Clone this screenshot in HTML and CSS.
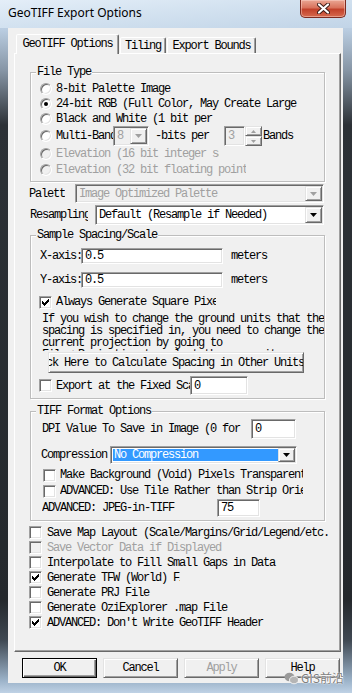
FILE: index.html
```html
<!DOCTYPE html>
<html>
<head>
<meta charset="utf-8">
<title>GeoTIFF Export Options</title>
<link rel="stylesheet" href="styles.css">
</head>
<body>
<div class="titlebar">
  <span class="title">GeoTIFF Export Options</span>
  <div class="close">
    <svg width="13" height="11" viewBox="0 0 13 11"><path d="M2 1.5L11 9.5M11 1.5L2 9.5" stroke="#3a1a14" stroke-width="4" stroke-linecap="round"/><path d="M2 1.5L11 9.5M11 1.5L2 9.5" stroke="#fff" stroke-width="2.2" stroke-linecap="round"/></svg>
  </div>
</div>
<div class="client">
  <div class="tabs">
    <div class="tab active t1">GeoTIFF Options</div>
    <div class="tab t2">Tiling</div>
    <div class="tab t3">Export Bounds</div>
  </div>
  <div class="panel">
    <div class="group g1">
      <div class="legend">File Type</div>
      <div class="rrow h15 first"><span class="radio"></span><span>8-bit Palette Image</span></div>
      <div class="rrow h15"><span class="radio on"></span><span class="clip w243">24-bit RGB (Full Color, May Create Large Files)</span></div>
      <div class="rrow h15"><span class="radio"></span><span class="clip w162">Black and White (1 bit per pixel)</span></div>
      <div class="rrow h20">
        <span class="radio"></span><span class="clip w57">Multi-Band</span>
        <div class="sunken dis combo c-bits"><span class="val">8</span><span class="arrow raised"><svg width="7" height="4" viewBox="0 0 7 4"><path d="M0 0h7L3.5 4z" fill="#a0a0a0"/></svg></span></div>
        <span class="bitsper">-bits per</span>
        <div class="sunken dis spinbox"><span class="val">3</span></div>
        <div class="spin"><span class="raised sb"><svg width="5" height="3" viewBox="0 0 5 3"><path d="M0 3h5L2.5 0z" fill="#a0a0a0"/></svg></span><span class="raised sb"><svg width="5" height="3" viewBox="0 0 5 3"><path d="M0 0h5L2.5 3z" fill="#a0a0a0"/></svg></span></div>
        <span class="bands">Bands</span>
      </div>
      <div class="rrow h16 dis"><span class="radio dis"></span><span class="clip w163">Elevation (16 bit integer samples)</span></div>
      <div class="rrow h16 dis"><span class="radio dis"></span><span class="clip w190">Elevation (32 bit floating point samples)</span></div>
    </div>

    <div class="line l-palett">
      <span class="clip w36">Palette</span>
      <div class="sunken dis combo c-palett"><span class="val dis">Image Optimized Palette</span><span class="arrow raised"><svg width="7" height="4" viewBox="0 0 7 4"><path d="M0 0h7L3.5 4z" fill="#a0a0a0"/></svg></span></div>
    </div>
    <div class="line l-resamp">
      <span class="clip w58">Resampling</span>
      <div class="sunken combo c-resamp"><span class="val">Default (Resample if Needed)</span><span class="arrow raised"><svg width="7" height="4" viewBox="0 0 7 4"><path d="M0 0h7L3.5 4z"/></svg></span></div>
    </div>

    <div class="group g2">
      <div class="legend">Sample Spacing/Scale</div>
      <div class="arow first">
        <span class="clip w41">X-axis:</span>
        <div class="sunken edit e-axis"><span class="val">0.5</span></div>
        <span class="unit">meters</span>
      </div>
      <div class="arow second">
        <span class="clip w41">Y-axis:</span>
        <div class="sunken edit e-axis"><span class="val">0.5</span></div>
        <span class="unit">meters</span>
      </div>
      <div class="crow2 sq">
        <span class="cb"><svg width="7" height="7" viewBox="0 0 7 7" shape-rendering="crispEdges"><path d="M6 0h1v1h-1zM5 1h2v1h-2zM0 2h1v1h-1zM4 2h3v1h-3zM0 3h2v1h-2zM3 3h3v1h-3zM0 4h5v1h-5zM1 5h3v1h-3zM2 6h1v1h-1z"/></svg></span>
        <span class="clip w160">Always Generate Square Pixels</span>
      </div>
      <div class="para">
        <span>If you wish to change the ground units that the</span>
        <span>spacing is specified in, you need to change the</span>
        <span>current projection by going to</span>
        <span>File-&gt;Projection to select the new units.</span>
      </div>
      <div class="raised btn calc"><span class="calc-text">Click Here to Calculate Spacing in Other Units</span></div>
      <div class="crow2 fixed">
        <span class="cb"></span>
        <span class="clip w134">Export at the Fixed Scale</span>
        <div class="sunken edit e-fixed"><span class="val">0</span></div>
      </div>
    </div>

    <div class="group g3">
      <div class="legend">TIFF Format Options</div>
      <div class="trow dpi">
        <span class="clip w204">DPI Value To Save in Image (0 for none)</span>
        <div class="sunken edit e-dpi"><span class="val">0</span></div>
      </div>
      <div class="trow comp">
        <span class="clip w69">Compression</span>
        <div class="sunken combo c-comp"><span class="val sel">No Compression</span><span class="arrow raised"><svg width="7" height="4" viewBox="0 0 7 4"><path d="M0 0h7L3.5 4z"/></svg></span></div>
      </div>
      <div class="crow3 first"><span class="cb"></span><span class="clip w243">Make Background (Void) Pixels Transparent</span></div>
      <div class="crow3"><span class="cb"></span><span class="clip w243">ADVANCED: Use Tile Rather than Strip Orientation</span></div>
      <div class="trow jpeg">
        <span class="clip w175">ADVANCED: JPEG-in-TIFF</span>
        <div class="sunken edit e-jpeg"><span class="val">75</span></div>
      </div>
    </div>

    <div class="checks">
      <div class="crow"><span class="cb"></span><span>Save Map Layout (Scale/Margins/Grid/Legend/etc.</span></div>
      <div class="crow dis"><span class="cb dis"></span><span>Save Vector Data if Displayed</span></div>
      <div class="crow"><span class="cb"></span><span>Interpolate to Fill Small Gaps in Data</span></div>
      <div class="crow"><span class="cb"><svg width="7" height="7" viewBox="0 0 7 7" shape-rendering="crispEdges"><path d="M6 0h1v1h-1zM5 1h2v1h-2zM0 2h1v1h-1zM4 2h3v1h-3zM0 3h2v1h-2zM3 3h3v1h-3zM0 4h5v1h-5zM1 5h3v1h-3zM2 6h1v1h-1z"/></svg></span><span class="clip w133">Generate TFW (World) File</span></div>
      <div class="crow"><span class="cb"></span><span>Generate PRJ File</span></div>
      <div class="crow"><span class="cb"></span><span>Generate OziExplorer .map File</span></div>
      <div class="crow"><span class="cb"><svg width="7" height="7" viewBox="0 0 7 7" shape-rendering="crispEdges"><path d="M6 0h1v1h-1zM5 1h2v1h-2zM0 2h1v1h-1zM4 2h3v1h-3zM0 3h2v1h-2zM3 3h3v1h-3zM0 4h5v1h-5zM1 5h3v1h-3zM2 6h1v1h-1z"/></svg></span><span>ADVANCED: Don't Write GeoTIFF Header</span></div>
    </div>
  </div>
  <div class="buttons">
    <div class="btn default">OK</div>
    <div class="btn raised">Cancel</div>
    <div class="btn raised dis">Apply</div>
    <div class="btn raised">Help</div>
  </div>
</div>
<div class="watermark">
  <svg width="15" height="13" viewBox="0 0 15 13"><ellipse cx="5.5" cy="5" rx="5" ry="4.2" fill="#9a9a9a"/><ellipse cx="10" cy="8" rx="4.5" ry="3.8" fill="#b5b5b5" stroke="#fff" stroke-width="0.8"/></svg>
  <span>GIS前沿</span>
</div>
</body>
</html>
```
FILE: styles.css
```css
* { box-sizing: border-box; margin: 0; padding: 0; }
html, body { width: 352px; height: 693px; overflow: hidden; }
body {
  position: relative;
  background: linear-gradient(180deg, #cfdeec 0, #b9cce0 30px, #8796a6 70px, #2c3136 125px, #24282c 600px, #3f4852 640px, #9db4ca 681px, #bfd2e5 693px);
  font-family: "Liberation Mono", monospace;
  font-size: 12px;
  line-height: 12px;
  letter-spacing: -1.2px;
  color: #000;
}

/* title bar */
.titlebar {
  height: 28px;
  display: flex;
  align-items: flex-start;
  background: linear-gradient(175deg, #e4eef8 0, #d3e2f0 45%, #c1d4e7 100%);
}
.title {
  font-family: "Noto Sans", sans-serif;
  font-size: 12px;
  line-height: 16px;
  letter-spacing: 0;
  margin: 5px 0 0 8px;
  color: #000;
}
.close {
  margin-left: auto;
  margin-right: 6px;
  width: 46px;
  height: 18px;
  border: 1px solid #7d2b20;
  border-top: none;
  border-radius: 0 0 5px 5px;
  background: linear-gradient(180deg, #eaa693 0, #d9735c 45%, #c2412a 55%, #d66a4e 100%);
  box-shadow: inset 0 0 0 1px rgba(255, 220, 210, 0.45);
  display: flex;
  align-items: center;
  justify-content: center;
}

/* client */
.client {
  margin-left: 8px;
  width: 335px;
  height: 655px;
  background: #f0f0f0;
  padding-top: 6px;
}
.tabs {
  margin-left: 8px;
  height: 20px;
  display: flex;
  align-items: flex-end;
}
.tab {
  height: 16px;
  margin-bottom: 1px;
  background: #f0f0f0;
  border: 1px solid;
  border-bottom: none;
  border-color: #fff #696969 transparent #fff;
  box-shadow: inset -1px 0 #a0a0a0;
  border-radius: 2px 2px 0 0;
  display: flex;
  justify-content: center;
  align-items: center;
  white-space: nowrap;
}
.tab.active {
  height: 20px;
  margin-bottom: 0;
  position: relative;
  z-index: 1;
  align-items: flex-start;
  padding-top: 3px;
}
.t1 { width: 103px; }
.t2 { width: 46px; margin-left: 1px; }
.t3 { width: 89px; margin-left: 1px; }

.panel {
  margin-top: -1px;
  margin-left: 6px;
  width: 327px;
  height: 599px;
  border: 1px solid;
  border-color: #fff #696969 #696969 #fff;
  box-shadow: inset -1px -1px #a0a0a0;
  display: flex;
  flex-direction: column;
  align-items: flex-start;
}

/* group boxes */
.group {
  margin-left: 15px;
  width: 295px;
  border: 1px solid #bdbdbd;
  box-shadow: inset 1px 1px #fff, 1px 1px #fff;
  display: flex;
  flex-direction: column;
  align-items: flex-start;
}
.g1 { margin-top: 18px; height: 110px; }
.g2 { margin-top: 10px; height: 164px; }
.g3 { margin-top: 12px; height: 110px; }
.legend {
  margin: -7px 0 0 5px;
  padding: 0 1px;
  height: 12px;
  background: #f0f0f0;
  white-space: nowrap;
}

.clip { overflow: hidden; white-space: nowrap; flex: none; }
.w36 { width: 36px; }
.w41 { width: 41px; }
.w57 { width: 57px; }
.w58 { width: 58px; }
.w69 { width: 69px; }
.w133 { width: 133px; }
.w134 { width: 134px; }
.w160 { width: 160px; }
.w162 { width: 162px; }
.w163 { width: 163px; }
.w175 { width: 175px; }
.w190 { width: 190px; }
.w204 { width: 204px; }
.w243 { width: 243px; }

.dis { color: #a0a0a0; }

/* radio rows */
.rrow { display: flex; align-items: center; margin-left: 9px; white-space: nowrap; }
.rrow.first { margin-top: 3px; }
.h15 { height: 15px; }
.h16 { height: 16px; }
.h20 { height: 20px; }

.radio {
  width: 12px;
  height: 12px;
  flex: none;
  margin-right: 4px;
  border-radius: 50%;
  background: #fff;
  border: 1px solid;
  border-color: #a0a0a0 #fff #fff #a0a0a0;
  box-shadow: inset 1px 1px #696969, inset -1px -1px #e3e3e3;
  display: flex;
  align-items: center;
  justify-content: center;
}
.radio.on::after {
  content: "";
  width: 4px;
  height: 4px;
  border-radius: 50%;
  background: #000;
}
.radio.dis { background: #f0f0f0; }

/* 3D controls */
.sunken {
  background: #fff;
  border: 1px solid;
  border-color: #a0a0a0 #fff #fff #a0a0a0;
  box-shadow: inset 1px 1px #696969, inset -1px -1px #e3e3e3;
  flex: none;
}
.sunken.dis { background: #f0f0f0; }
.raised {
  background: #f0f0f0;
  border: 1px solid;
  border-color: #e3e3e3 #696969 #696969 #e3e3e3;
  box-shadow: inset 1px 1px #fff, inset -1px -1px #a0a0a0;
}

.combo { display: flex; align-items: stretch; padding: 1px; }
.combo .val { flex: 1; display: flex; align-items: center; padding-left: 2px; white-space: nowrap; overflow: hidden; }
.combo .arrow {
  width: 17px;
  flex: none;
  display: flex;
  align-items: center;
  justify-content: center;
}
.combo .val.sel { background: #3399ff; color: #fff; margin: 1px 0 1px 1px; padding-left: 1px; }

.edit { display: flex; align-items: center; padding-left: 3px; }

.c-bits { width: 36px; height: 20px; }
.bitsper { margin-left: 6px; width: 54px; }
.spinbox { margin-left: 15px; width: 21px; height: 20px; display: flex; align-items: center; padding-left: 3px; }
.spin { width: 17px; height: 20px; display: flex; flex-direction: column; flex: none; }
.sb { flex: 1; display: flex; align-items: center; justify-content: center; }
.bands { margin-left: 1px; }

/* palette / resampling lines */
.line { display: flex; align-items: center; }
.l-palett { margin-top: 2px; margin-left: 14px; height: 19px; }
.c-palett { margin-left: 10px; width: 249px; height: 19px; }
.l-resamp { margin-top: 2px; margin-left: 15px; height: 20px; }
.c-resamp { margin-left: 7px; width: 229px; height: 20px; }

/* spacing group */
.arow { display: flex; align-items: center; margin-left: 9px; height: 16px; }
.arow.first { margin-top: 7px; }
.arow.second { margin-top: 8px; }
.e-axis { width: 142px; height: 16px; }
.unit { margin-left: 8px; }

.cb {
  width: 13px;
  height: 13px;
  flex: none;
  background: #fff;
  border: 1px solid;
  border-color: #a0a0a0 #fff #fff #a0a0a0;
  box-shadow: inset 1px 1px #696969, inset -1px -1px #e3e3e3;
  display: flex;
  align-items: center;
  justify-content: center;
}
.cb.dis { background: #f0f0f0; }

.crow2 { display: flex; align-items: center; margin-left: 8px; }
.crow2 .cb { margin-right: 4px; }
.crow2.sq { margin-top: 7px; height: 14px; }
.para {
  margin-top: 4px;
  margin-left: 11px;
  height: 38px;
  overflow: hidden;
  display: flex;
  flex-direction: column;
  white-space: nowrap;
}
.btn {
  width: 75px;
  height: 20px;
  display: flex;
  align-items: center;
  justify-content: center;
  overflow: hidden;
  white-space: nowrap;
  flex: none;
}
.btn.calc { margin-top: 1px; margin-left: 17px; width: 256px; height: 21px; justify-content: flex-start; }
.calc-text { flex: none; margin-left: -21px; }
.crow2.fixed { margin-top: 3px; height: 19px; }
.e-fixed { width: 58px; height: 19px; }

/* tiff group */
.trow { display: flex; align-items: center; }
.trow.dpi { margin-top: 2px; margin-left: 11px; height: 20px; }
.e-dpi { margin-left: 5px; width: 45px; height: 20px; }
.trow.comp { margin-top: 7px; margin-left: 10px; height: 18px; }
.c-comp { margin-left: 0; width: 187px; height: 18px; }
.crow3 { display: flex; align-items: center; margin-left: 12px; height: 16px; }
.crow3.first { margin-top: 3px; }
.crow3 .cb { margin-right: 4px; }
.trow.jpeg { margin-left: 11px; height: 18px; }
.e-jpeg { width: 43px; height: 18px; }

/* bottom checks */
.checks { margin-top: 4px; margin-left: 14px; display: flex; flex-direction: column; }
.crow { display: flex; align-items: center; height: 15px; white-space: nowrap; }
.crow .cb { margin-right: 5px; }

/* dialog buttons */
.buttons { display: flex; gap: 6px; margin-top: 6px; margin-left: 14px; }
.btn.default {
  background: #f0f0f0;
  border: 1px solid #000;
  box-shadow: inset 1px 1px #fff, inset -1px -1px #696969, inset -2px -2px #a0a0a0;
}

.watermark {
  position: absolute;
  left: 284px;
  top: 671px;
  display: flex;
  align-items: center;
  gap: 2px;
  font-family: "Noto Sans CJK SC", sans-serif;
  font-size: 12px;
  line-height: 14px;
  letter-spacing: 0;
  color: rgba(110, 110, 110, 0.9);
  text-shadow: 0 0 2px #fff, 0 0 1px #fff;
}
```
